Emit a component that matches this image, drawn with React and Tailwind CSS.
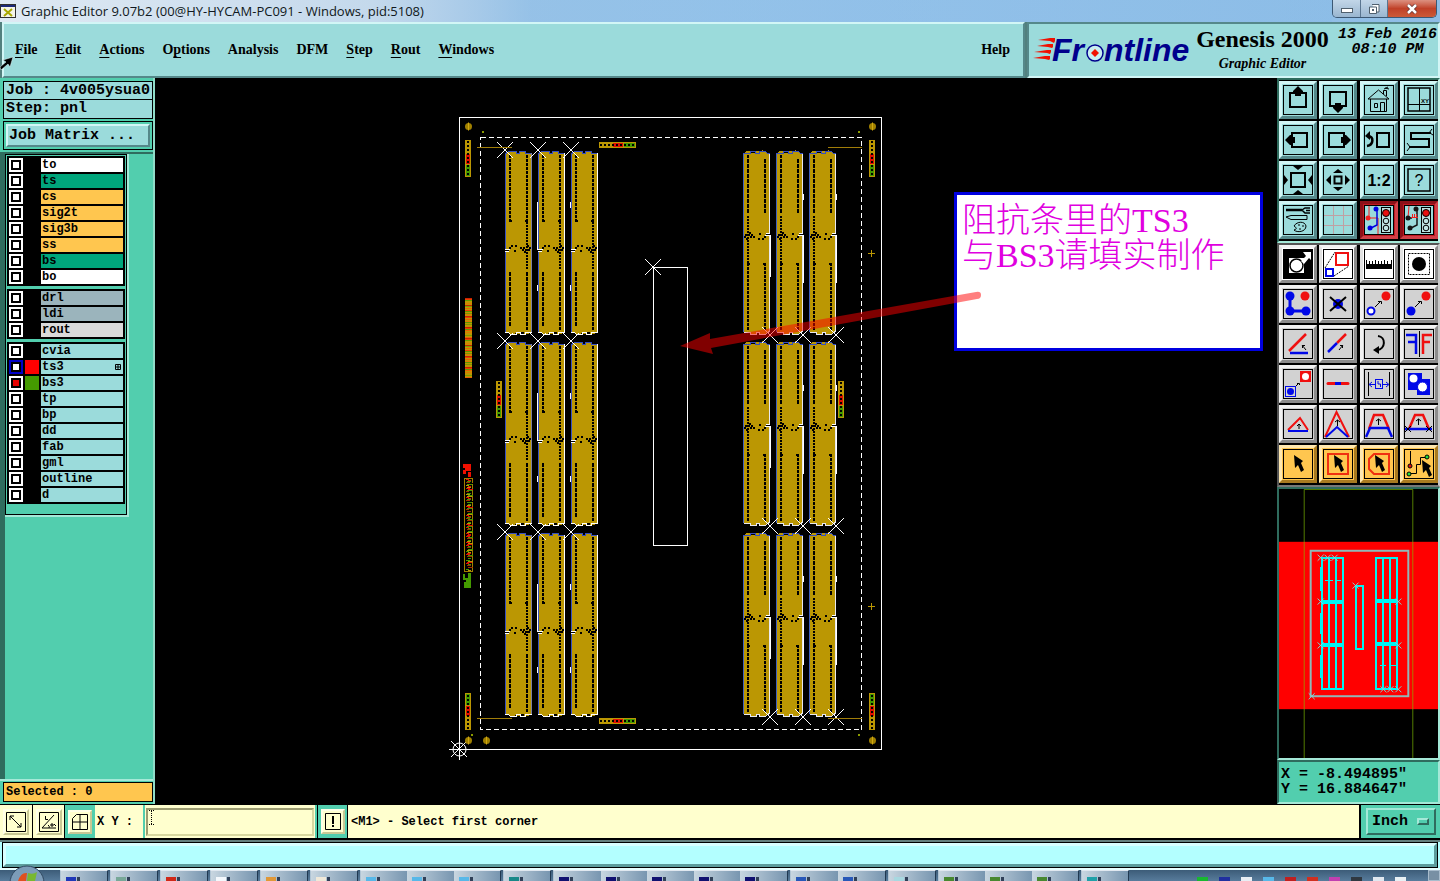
import React, { useState } from "react";

const MENUS = [
  { label: "File", key: 0 },
  { label: "Edit", key: 0 },
  { label: "Actions", key: 0 },
  { label: "Options", key: 1 },
  { label: "Analysis", key: -1 },
  { label: "DFM", key: -1 },
  { label: "Step", key: 0 },
  { label: "Rout", key: 0 },
  { label: "Windows", key: 0 },
];

const LAYER_GROUPS = [
  [
    { name: "to", color: "bg-white" },
    { name: "ts", color: "bg-[#00a67c]" },
    { name: "cs", color: "bg-[#ffc64f]" },
    { name: "sig2t", color: "bg-[#ffc64f]" },
    { name: "sig3b", color: "bg-[#ffc64f]" },
    { name: "ss", color: "bg-[#ffc64f]" },
    { name: "bs", color: "bg-[#00a67c]" },
    { name: "bo", color: "bg-white" },
  ],
  [
    { name: "drl", color: "bg-[#9bb4bc]" },
    { name: "ldi", color: "bg-[#9bb4bc]" },
    { name: "rout", color: "bg-[#dadada]" },
  ],
  [
    { name: "cvia", color: "bg-[#9bdbdb]" },
    { name: "ts3", color: "bg-[#9bdbdb]", swatch: "bg-[#ff0000]", box: "bg-[#0000c8]", affected: true },
    { name: "bs3", color: "bg-[#9bdbdb]", swatch: "bg-[#449a00]", work: true },
    { name: "tp", color: "bg-[#9bdbdb]" },
    { name: "bp", color: "bg-[#9bdbdb]" },
    { name: "dd", color: "bg-[#9bdbdb]" },
    { name: "fab", color: "bg-[#9bdbdb]" },
    { name: "gml", color: "bg-[#9bdbdb]" },
    { name: "outline", color: "bg-[#9bdbdb]" },
    { name: "d", color: "bg-[#9bdbdb]" },
  ],
];

const RED = "#f01010";
const BLUE = "#0008e8";

/* ---------------- TOOL ICONS (30 x 30) ---------------- */
const Pointer = ({ x = 0, y = 0 }) => (
  <path
    transform={`translate(${x} ${y})`}
    d="M0 0L9 6L7 8L10 15L7 17L4 10L1 13Z"
    fill="#000"
  />
);

const TrafficLight = ({ a, b }) => (
  <>
    <path d="M5 1V13H14V29" fill="none" stroke={a} />
    <path d="M13 4V20L7 23" fill="none" stroke={b} strokeWidth="1.5" />
    <circle cx="4" cy="13" r="2.5" fill={a} />
    <circle cx="12" cy="4" r="2.5" fill={b} />
    <circle cx="6" cy="23" r="2.5" fill={b} />
    <rect x="17.5" y="2.5" width="9" height="25" fill="#bfe3e3" stroke="#000" />
    <circle cx="22" cy="8" r="3.5" fill="#e81010" stroke="#000" />
    <circle cx="22" cy="16" r="2.8" fill="#bfe3e3" stroke="#000" />
    <circle cx="22" cy="23" r="2.8" fill="#bfe3e3" stroke="#000" />
  </>
);

const VIEW_TOOLS = [
  {
    name: "Pan up",
    icon: (
      <>
        <rect x="7" y="8" width="16" height="14" fill="none" stroke="#000" strokeWidth="2" />
        <path d="M15 1L20 6V8H18V11H12V8H10V6Z" />
      </>
    ),
  },
  {
    name: "Pan down",
    icon: (
      <>
        <rect x="7" y="7" width="16" height="14" fill="none" stroke="#000" strokeWidth="2" />
        <path d="M15 28L20 23V21H18V18H12V21H10V23Z" />
      </>
    ),
  },
  {
    name: "Home",
    icon: (
      <g fill="none" stroke="#000">
        <path d="M4 14L14.500 5L25 14Z" />
        <path d="M6.500 14V26.500H22.500V14M10.500 18.500H13.500V22.500H10.500ZM16.500 26V17.500H20.500V26M19.500 9V5.500H22.500V11" />
        <path d="M20 4L24 2M21 3L25 4" />
      </g>
    ),
  },
  {
    name: "Zoom coordinates",
    icon: (
      <>
        <rect x="4" y="3" width="22" height="23" fill="none" stroke="#000" strokeWidth="1.500" />
        <path d="M15.500 3V26M4 19.500H26" stroke="#000" fill="none" />
        <text x="17" y="18" fontSize="6" fontWeight="bold" fontFamily="Liberation Sans, sans-serif">XY</text>
      </>
    ),
  },
  {
    name: "Pan left",
    icon: (
      <>
        <rect x="9" y="8" width="15" height="14" fill="none" stroke="#000" strokeWidth="2" />
        <path d="M2 15L7 10H8V12H12V18H8V20H7Z" />
      </>
    ),
  },
  {
    name: "Pan right",
    icon: (
      <>
        <rect x="6" y="8" width="15" height="14" fill="none" stroke="#000" strokeWidth="2" />
        <path d="M28 15L23 10H22V12H18V18H22V20H23Z" />
      </>
    ),
  },
  {
    name: "Previous view",
    icon: (
      <>
        <rect x="13" y="8" width="12" height="14" fill="none" stroke="#000" strokeWidth="2" />
        <path d="M4 11C10 11 10 20 3 21" fill="none" stroke="#000" strokeWidth="2.500" />
        <path d="M1 11L6 6V15Z" />
      </>
    ),
  },
  {
    name: "Serpentine pan",
    icon: (
      <>
        <path d="M27 8H7V14H25V22H5" fill="none" stroke="#000" strokeWidth="2" />
        <path d="M25 8L28 4M26 8L29 10M6 22L3 18M6 22L3 26" fill="none" stroke="#000" />
      </>
    ),
  },
  {
    name: "Zoom in",
    icon: (
      <>
        <rect x="8" y="8" width="14" height="14" fill="none" stroke="#000" strokeWidth="2" />
        <path d="M10 1H20L15 5ZM10 29H20L15 25ZM1 10V20L5 15ZM29 10V20L25 15Z" />
      </>
    ),
  },
  {
    name: "Zoom out",
    icon: (
      <>
        <rect x="11.500" y="11.500" width="7" height="7" fill="none" stroke="#000" strokeWidth="2" />
        <path d="M10 8H20L15 4ZM10 22H20L15 26ZM8 10V20L3 15ZM22 10V20L27 15Z" />
      </>
    ),
  },
  {
    name: "Zoom 1:2",
    icon: (
      <text x="15" y="21" textAnchor="middle" fontSize="16" fontWeight="bold" fontFamily="Liberation Sans, sans-serif">
        1:2
      </text>
    ),
  },
  {
    name: "Query",
    icon: (
      <>
        <rect x="4" y="4" width="22" height="22" fill="none" stroke="#000" strokeWidth="1.500" />
        <text x="15" y="21" textAnchor="middle" fontSize="16" fontFamily="Liberation Sans, sans-serif">
          ?
        </text>
      </>
    ),
  },
  {
    name: "Options",
    icon: (
      <>
        <path d="M3 5H19" stroke="#000" strokeWidth="2.500" />
        <path d="M27 3H22L19 5L22 8H27M23 5.500H27" fill="none" stroke="#000" strokeWidth="1.500" />
        <path d="M3 12L8 10.500H24V14.500H8Z" fill="none" stroke="#000" />
        <path d="M11 21C14 16 22 16 23 21C23 27 14 28 11 25C14 24 14 23 11 21Z" fill="none" stroke="#000" />
        <path d="M15 20H17M19 21H21M16 24H18" stroke="#000" />
      </>
    ),
  },
  {
    name: "Grid",
    icon: <path d="M10.500 0V30M20.500 0V30M0 10.500H30M0 20.500H30" stroke="#c0a0a4" fill="none" />,
  },
  { name: "Net check", tone: "alert", icon: <TrafficLight a="#f02020" b="#0000e0" /> },
  {
    name: "Short check",
    tone: "alert",
    icon: (
      <>
        <path d="M13 4V20L7 23M4 13H8" fill="none" stroke="#151515" strokeWidth="1.500" />
        <path d="M5 1L4 13" stroke="#f02020" />
        <circle cx="4" cy="13" r="2.5" fill="#151515" />
        <circle cx="12" cy="4" r="2.5" fill="#151515" />
        <circle cx="6" cy="23" r="2.5" fill="#151515" />
        <rect x="17.5" y="2.5" width="9" height="25" fill="#bfe3e3" stroke="#000" />
        <circle cx="22" cy="8" r="3.5" fill="#e81010" stroke="#000" />
        <circle cx="22" cy="16" r="2.8" fill="#bfe3e3" stroke="#000" />
        <circle cx="22" cy="23" r="2.8" fill="#bfe3e3" stroke="#000" />
        <path d="M7 12.500H14M8.500 9V12M10.500 9V12M12.500 9V12" stroke="#f02020" />
      </>
    ),
  },
];

const EDIT_TOOLS = [
  {
    name: "Feature select",
    tone: "white",
    frame: "bg-black",
    icon: (
      <>
        <rect x="6" y="9" width="15" height="15" fill="#fff" />
        <circle cx="13.500" cy="16.500" r="6.500" fill="#fff" stroke="#000" strokeWidth="1.500" />
        <path d="M18 12L23 7L20 3H28V11L26 9L21 15Z" fill="#fff" />
      </>
    ),
  },
  {
    name: "Scale",
    tone: "white",
    icon: (
      <>
        <rect x="13" y="4" width="12" height="12" fill="none" stroke={RED} strokeWidth="2" />
        <rect x="3" y="20" width="7" height="7" fill="none" stroke={BLUE} strokeWidth="2" />
        <path d="M2 19L12 3M11 27L26 17" stroke="#000" strokeDasharray="2 1" />
      </>
    ),
  },
  {
    name: "Measure",
    tone: "white",
    icon: (
      <>
        <rect x="2" y="15" width="26" height="5" />
        <path
          d="M2.500 15V11M5.500 15V12M8.500 15V12M11.500 15V11M14.500 15V12M17.500 15V12M20.500 15V11M23.500 15V12M27.500 15V11"
          stroke="#000"
        />
      </>
    ),
  },
  {
    name: "Pad",
    tone: "white",
    icon: (
      <>
        <rect x="4.500" y="4.500" width="21" height="21" fill="none" stroke="#000" strokeDasharray="2 1" />
        <circle cx="15" cy="15" r="7" />
      </>
    ),
  },
  {
    name: "Add",
    icon: (
      <>
        <path d="M7 7V22H23" fill="none" stroke={BLUE} strokeWidth="3" />
        <circle cx="7" cy="7" r="4.500" fill={BLUE} />
        <circle cx="7" cy="22" r="4.500" fill={BLUE} />
        <circle cx="23" cy="22" r="4.500" fill={BLUE} />
        <circle cx="22" cy="7" r="4.500" fill={RED} />
      </>
    ),
  },
  {
    name: "Delete",
    icon: (
      <>
        <circle cx="15" cy="15" r="5" fill={BLUE} />
        <path d="M7 8L23 22M23 8L7 22" stroke="#000" strokeWidth="2" />
      </>
    ),
  },
  {
    name: "Move",
    icon: (
      <>
        <circle cx="22" cy="7" r="4.500" fill={RED} />
        <circle cx="7" cy="22" r="3.500" fill="#fff" stroke={BLUE} strokeWidth="2" />
        <path d="M11 18L17 12M14 12.500H17.500V15" fill="none" stroke="#000" />
      </>
    ),
  },
  {
    name: "Copy",
    icon: (
      <>
        <circle cx="22" cy="7" r="4.500" fill={RED} />
        <circle cx="7" cy="22" r="4.500" fill={BLUE} />
        <path d="M11 18L17 12M14 12.500H17.500V15" fill="none" stroke="#000" />
      </>
    ),
  },
  {
    name: "Rotate",
    icon: (
      <>
        <path d="M6 22L23 5" stroke={RED} strokeWidth="2.500" />
        <path d="M7 24H25" stroke={BLUE} strokeWidth="2.500" />
        <path d="M23 21L19 16M19.500 19V16.500H22" fill="none" stroke="#000" />
      </>
    ),
  },
  {
    name: "Stretch",
    icon: (
      <>
        <path d="M14 14L23 5" stroke={RED} strokeWidth="2.500" />
        <path d="M5 23L14 14" stroke={BLUE} strokeWidth="2.500" />
        <path d="M16 21L20 16M17 16.500H19.500V19" fill="none" stroke="#000" />
      </>
    ),
  },
  {
    name: "Turn",
    icon: (
      <>
        <path d="M14 7C22 8 22 20 13 21" fill="none" stroke="#000" strokeWidth="2" />
        <path d="M9 21L15 17V25Z" />
      </>
    ),
  },
  {
    name: "Mirror",
    icon: (
      <>
        <path d="M2 6H12V25M4 13H12" fill="none" stroke={BLUE} strokeWidth="2.500" />
        <path d="M15.500 2V28" stroke="#000" />
        <path d="M28 6H19V25M26 13H19" fill="none" stroke={RED} strokeWidth="2.500" />
      </>
    ),
  },
  {
    name: "Replace",
    icon: (
      <>
        <rect x="17" y="2" width="11" height="11" fill={RED} />
        <circle cx="22.500" cy="7.500" r="3.500" fill="#fff" />
        <rect x="2.500" y="17.500" width="10" height="10" fill="none" stroke={BLUE} />
        <circle cx="7.500" cy="22.500" r="3.500" fill={BLUE} />
        <path d="M13 17L16 14M14 14.500H16.500V16" fill="none" stroke="#000" />
      </>
    ),
  },
  {
    name: "Merge lines",
    icon: (
      <>
        <path d="M5 14.500H25" stroke={RED} strokeWidth="3" strokeLinecap="round" />
        <path d="M12 14.500H18" stroke={BLUE} strokeWidth="3" />
      </>
    ),
  },
  {
    name: "Spacing",
    icon: (
      <>
        <path d="M4.500 3V27M25.500 3V27" stroke="#000" />
        <path d="M6 15.500H12M18 15.500H24M8 13L5 15.500L8 18M22 13L25 15.500L22 18" fill="none" stroke={BLUE} />
        <rect x="11.500" y="10.500" width="7" height="9" fill="none" stroke={BLUE} />
        <path d="M14 12V15H16.500V18" fill="none" stroke={BLUE} />
      </>
    ),
  },
  {
    name: "Substitute",
    icon: (
      <>
        <path d="M4 4H18V10H26V26H13V21H4Z" fill={BLUE} />
        <circle cx="9.500" cy="9.500" r="4" fill="#fff" />
        <circle cx="18.500" cy="18" r="5" fill="#fff" stroke={BLUE} />
      </>
    ),
  },
  {
    name: "Slide corner",
    icon: (
      <>
        <path d="M5 21L17 9L25 21" fill="none" stroke={RED} strokeWidth="2" />
        <path d="M5 22H25" stroke={BLUE} strokeWidth="2" />
        <path d="M16 20V15M14 17L16 15L18 17" fill="none" stroke="#000" />
      </>
    ),
  },
  {
    name: "Move vertex",
    icon: (
      <>
        <path d="M2 28L13.500 3L26 28" fill="none" stroke={RED} strokeWidth="2" />
        <path d="M3 28L14 18L25 28" fill="none" stroke={BLUE} strokeWidth="2" />
        <path d="M14.500 17V11M12 13L14.500 11L17 13" fill="none" stroke="#000" />
      </>
    ),
  },
  {
    name: "Move segment",
    icon: (
      <>
        <path d="M5 20L10 6H19L25 20" fill="none" stroke={RED} strokeWidth="2.500" />
        <path d="M2 28L6 19H24L28 28" fill="none" stroke={BLUE} strokeWidth="2.500" />
        <path d="M14.500 16V10M12 12L14.500 10L17 12" fill="none" stroke="#000" />
      </>
    ),
  },
  {
    name: "Lift segment",
    icon: (
      <>
        <path d="M5 20L11 6H19L25 20" fill="none" stroke={RED} strokeWidth="2.500" />
        <path d="M1 20H28" stroke={BLUE} strokeWidth="2.500" />
        <path d="M1 17L7 23M7 17L1 23M22 17L28 23M28 17L22 23" stroke="#000" />
        <path d="M14.500 16V10M12 12L14.500 10L17 12" fill="none" stroke="#000" />
      </>
    ),
  },
  { name: "Select single", tone: "amber", icon: <Pointer x={11} y={6} /> },
  {
    name: "Select frame",
    tone: "amber",
    icon: (
      <>
        <rect x="5" y="5" width="20" height="20" fill="none" stroke="#f03010" strokeWidth="2" />
        <Pointer x={11} y={6} />
      </>
    ),
  },
  {
    name: "Select polygon",
    tone: "amber",
    icon: (
      <>
        <path d="M10 5H25V25H10L5 20V10Z" fill="none" stroke="#f03010" strokeWidth="2" />
        <Pointer x={11} y={6} />
      </>
    ),
  },
  {
    name: "Select net",
    tone: "amber",
    icon: (
      <>
        <path d="M6.500 2V15M5 24.500H12.500V15.500H16.500V8.500H23" fill="none" stroke="#000" />
        <circle cx="6" cy="17" r="2" fill="#e01010" stroke="#000" />
        <circle cx="5" cy="25" r="2" fill="#20e040" stroke="#000" />
        <circle cx="23" cy="8" r="2" fill="#20e040" stroke="#000" />
        <Pointer x={18} y={11} />
      </>
    ),
  },
];

const TONES = {
  teal: "bg-[#9bdbdb] border-t-[#d2f6f6] border-l-[#d2f6f6] border-r-[#55888a] border-b-[#55888a]",
  gray: "bg-[#d2d2d2] border-t-[#f2f2f2] border-l-[#f2f2f2] border-r-[#8c8c8c] border-b-[#8c8c8c]",
  white: "bg-white border-t-[#f2f2f2] border-l-[#e2e2e2] border-r-[#8c8c8c] border-b-[#8c8c8c]",
  amber: "bg-[#ffc64f] border-t-[#ffe8b0] border-l-[#ffe8b0] border-r-[#a87a20] border-b-[#a87a20]",
  alert: "bg-[#c01820] border-t-[#8c1018] border-l-[#8c1018] border-r-[#d04048] border-b-[#d04048]",
};

function ToolButton({ tool, tone }) {
  const t = tool.tone || tone;
  return (
    <button
      aria-label={tool.name}
      className={`flex size-[38px] items-center justify-center border-3 ${TONES[t]}`}
    >
      <span className={`block size-[30px] border border-black ${tool.frame || (t === "alert" ? "bg-[#9bdbdb]" : "")}`}>
        <svg viewBox="1 1 28 28" className="block size-full">
          {tool.icon}
        </svg>
      </span>
    </button>
  );
}

/* ---------------- BOARD DRAWING ---------------- */
const SCATTER = [
  [4, 97], [6, 95], [10, 95], [9, 100], [15, 97], [17, 99], [18, 97], [19, 101], [22, 95], [23, 99], [24, 97], [20, 99],
];

const STRIP_BODY =
  "M0 4L2 3L4 1H11V3H14V1H20V3H26V181L24 184H19V182H15V184H11V182L8 185L4 183V182H0Z";

function Strip({ x, y, variant, flip }) {
  const edge = variant === 0 ? "#8080a0" : "#ffffff";
  return (
    <g transform={flip ? `translate(${x + 27} ${y + 185}) rotate(180)` : `translate(${x} ${y})`}>
      <path d={STRIP_BODY} fill="#bb9703" />
      <path d="M0.500 182V4L4 1H11V3H14V1H20V3H26" fill="none" stroke={flip ? "#e8e8f0" : "#3850c0"} />
      <path d="M26.500 3V182" fill="none" stroke={flip ? "#4060c0" : edge} />
      <path d="M0 182H3L5 184H11V182H15V184H20V182H27" fill="none" stroke={flip ? "#3850c0" : "#fff"} />
      {variant > 0 && <path d="M-0.500 52V58M-0.500 135V141" stroke="#fff" />}
      {(variant === 1 || flip) && <path d="M-0.500 58V100" stroke="#fff" />}
      <path d="M0 99.500H5M0 101.500H4" stroke="#fff" />
      <path d="M0 100.500H4" stroke="#000" />
      <path d="M5 5V72" stroke="#000" strokeWidth="2" strokeDasharray="3 1" />
      <path d="M5 122V177" stroke="#000" strokeWidth="2" strokeDasharray="4 1" />
      <path d="M22 5V72" stroke="#000" strokeWidth="2" strokeDasharray="3 1" />
      <path d="M22 72V120" stroke="#000" strokeWidth="2" strokeDasharray="2 1" />
      <path d="M22 122V180" stroke="#000" strokeWidth="2" strokeDasharray="4 1" />
      <path d="M4 71H7M20 71H23" stroke="#000" strokeWidth="2" />
      {SCATTER.map(([sx, sy]) => (
        <rect key={`${sx}-${sy}`} x={sx} y={sy} width="2" height="2" />
      ))}
    </g>
  );
}

const Cross = ({ x, y, r = 8 }) => (
  <path
    d={`M${x - r} ${y - r}L${x + r} ${y + r}M${x + r} ${y - r}L${x - r} ${y + r}`}
    stroke="#fff"
    fill="none"
    shapeRendering="crispEdges"
  />
);

function Coupon({ x, y, rotate = 0 }) {
  return (
    <g transform={`translate(${x} ${y}) rotate(${rotate})`}>
      <rect width="6" height="37" fill="#bb9703" />
      <rect x="1" y="14" width="4" height="10" fill="#e01000" />
      <rect x="1" y="25" width="4" height="11" fill="#449a00" />
      <path d="M3 1V36" stroke="#000" strokeWidth="2" strokeDasharray="2 2" />
    </g>
  );
}

const LEFT_COLS = [505, 538, 571];
const RIGHT_COLS = [743, 776, 809];
const ROWS = [150, 341, 532];
const FIDUCIALS = [[468.5, 126.5], [872.5, 126.5], [468.5, 740.5], [486.5, 740.5], [872.5, 740.5]];
const STRIPE_COLORS = ["#c82000", "#bb9703", "#e86000", "#bb9703", "#5a9a00", "#bb9703", "#e07800", "#e84000", "#7a9a00", "#bb9703"];
const LABEL_COLORS = ["#e01000", "#449a00", "#a03000", "#e01000", "#bb9703", "#000", "#449a00"];

function Board() {
  return (
    <svg viewBox="155 78 1121 726" preserveAspectRatio="xMaxYMin meet" className="block size-full">
      <g fill="none" stroke="#fff" shapeRendering="crispEdges">
        <rect x="459.500" y="117.500" width="422" height="632" />
        <rect x="480.500" y="137.500" width="381" height="592" strokeDasharray="5 3" />
        <rect x="653.500" y="267.500" width="34" height="278" />
      </g>

      <g shapeRendering="crispEdges">
        {ROWS.map((y) => (
          <React.Fragment key={y}>
            {LEFT_COLS.map((x, i) => (
              <Strip key={x} x={x} y={y} variant={i} />
            ))}
            {RIGHT_COLS.map((x, i) => (
              <Strip key={x} x={x} y={y} variant={i} flip />
            ))}
          </React.Fragment>
        ))}
      </g>
      {ROWS.map((y) => (
        <React.Fragment key={y}>
          {LEFT_COLS.map((x) => (
            <Cross key={x} x={x} y={y} />
          ))}
          {RIGHT_COLS.map((x) => (
            <Cross key={x} x={x + 27} y={y + 185} />
          ))}
        </React.Fragment>
      ))}
      <Cross x={653} y={267} />

      {/* origin */}
      <Cross x={459} y={749} />
      <circle cx="459.500" cy="749.500" r="6.500" fill="none" stroke="#fff" />
      <path d="M449 749.500H470M459.500 739V760" stroke="#fff" />

      {/* tooling marks */}
      {FIDUCIALS.map(([x, y]) => (
        <g key={`${x}-${y}`}>
          <circle cx={x} cy={y} r="3.500" fill="#a08000" />
          <path d={`M${x} ${y - 4}V${y + 4}`} stroke="#d0a810" />
        </g>
      ))}
      <path d="M482 132H484M858 132H860M471 735H473M858 735H860" stroke="#8a9a00" strokeWidth="2" />
      <path d="M477 147.500H512M828 147.500H862M477 718.500H512M828 718.500H862" stroke="#a07d08" />
      <path d="M868 253.500H875M871.500 250V257M868 606.500H875M871.500 603V610" stroke="#bb9703" />

      <g shapeRendering="crispEdges">
        <Coupon x={465} y={140} />
        <Coupon x={869} y={140} />
        <Coupon x={471} y={730} rotate={180} />
        <Coupon x={875} y={730} rotate={180} />
        <Coupon x={496} y={381} />
        <Coupon x={838} y={381} />
        <Coupon x={599} y={148} rotate={-90} />
        <Coupon x={599} y={724} rotate={-90} />

        {Array.from({ length: 80 }, (_, i) => (
          <rect key={i} x="465" y={298 + i} width="7" height="1" fill={STRIPE_COLORS[(i * 7 + (i >> 2)) % 10]} />
        ))}

        <path d="M463 464H471V471H466V474H463V470H465V468H463ZM468 472H471V477H468Z" fill="#f01000" />
        <rect x="464.500" y="478.500" width="8" height="93" fill="none" stroke="#a08000" />
        {Array.from({ length: 92 }, (_, i) => (
          <rect
            key={i}
            x={466 + ((i * 5) % 3)}
            y={479 + i}
            width={3 + ((i * 3 + (i >> 1)) % 3)}
            height="1"
            fill={LABEL_COLORS[(i * 3 + (i >> 3)) % 7]}
          />
        ))}
        <path d="M463 574H465V578H468V573H471V588H464V582H466V580H463Z" fill="#449a00" />
      </g>
    </svg>
  );
}

function Canvas() {
  return (
    <main className="relative min-w-0 flex-1 bg-black">
      <div className="absolute inset-0">
        <Board />
      </div>
      <div className="absolute top-[114px] right-[13px] h-[159px] w-[309px] border-3 border-[#0000e0] bg-white pt-2 pl-[5px] font-['Liberation_Serif','Noto_Sans_CJK_SC',serif] text-[34px] leading-[35px] font-light whitespace-nowrap text-[#e000e0]">
        阻抗条里的TS3
        <br />
        与BS3请填实制作
      </div>
      <svg
        viewBox="155 78 1121 726"
        preserveAspectRatio="xMaxYMin meet"
        className="pointer-events-none absolute inset-0 size-full"
      >
        <path
          d="M680 346L710 333L710 339L976 292Q981 291 981 295Q981 299 977 299L711 348L713 354Z"
          fill="#ff0000"
          fillOpacity="0.5"
        />
      </svg>
    </main>
  );
}

/* ---------------- LEFT PANEL ---------------- */
function LayerRow({ layer }) {
  return (
    <label className="flex h-[14px] items-center bg-black text-[12px] leading-[14px]">
      <span className={`flex size-[14px] items-center justify-center ${layer.box || "bg-white"}`}>
        <input
          type="checkbox"
          defaultChecked={!!layer.work}
          className="m-0 size-[10px] appearance-none border-2 border-black bg-white checked:bg-[#e80000]"
        />
      </span>
      <span className={`mx-[2px] size-[14px] ${layer.swatch || "bg-black"}`} />
      <span className={`flex h-[14px] flex-1 items-center justify-between pl-px ${layer.color}`}>
        {layer.name}
        {layer.affected && (
          <svg viewBox="0 0 6 6" className="mr-[2px] size-[6px]">
            <path d="M0.500 0.500H5.500V5.500H0.500ZM3 0V6M0 3H6" fill="none" stroke="#000" />
          </svg>
        )}
      </span>
    </label>
  );
}

function LeftPanel() {
  return (
    <aside className="flex w-[155px] shrink-0 flex-col border-r-2 border-[#8fdcc8] bg-[#52ceae] font-['Liberation_Mono',monospace] font-bold text-black">
      <div className="pt-[3px] pl-[3px] text-[15px] leading-[17px] whitespace-nowrap">
        <div className="h-[19px] overflow-hidden border border-black bg-[#9bdbdb] pl-[2px]">Job : 4v005ysua0</div>
        <div className="h-[19px] border border-t-0 border-black bg-[#9bdbdb] pl-[2px]">Step: pnl</div>
        <div className="mt-[2px] border border-black p-[2px]">
          <button className="block h-[23px] w-full border-2 border-t-[#d2f6f6] border-r-[#55888a] border-b-[#55888a] border-l-[#d2f6f6] bg-[#9bdbdb] pl-px text-left">
            Job Matrix ...
          </button>
        </div>
      </div>

      <div className="mt-[2px] flex-1 border-t-2 border-l-5 border-[#2f6c5e]">
        <div className="w-[124px] border-r-2 border-b-2 border-[#a5e9d8]">
          <div className="flex flex-col gap-[3px] border border-black px-px pt-px pb-[10px]">
            {LAYER_GROUPS.map((group, i) => (
              <div key={i} className="flex flex-col gap-[2px] bg-black p-[2px]">
                {group.map((layer) => (
                  <LayerRow key={layer.name} layer={layer} />
                ))}
              </div>
            ))}
          </div>
        </div>
      </div>

      <div className="border-t-2 border-[#a5e9d8] pt-px pb-[2px] pl-[3px]">
        <div className="h-5 border border-black bg-[#ffc64f] pl-[2px] text-[12px] leading-[18px]">Selected : 0</div>
      </div>
    </aside>
  );
}

/* ---------------- RIGHT PANEL ---------------- */
const PREVIEW_MARKS = [
  [1320, 557], [1327, 557], [1334, 557], [1320, 601], [1320, 645],
  [1398, 601], [1398, 645], [1398, 689], [1390, 689], [1383, 689], [1355, 585], [1311, 696],
];

function Preview() {
  return (
    <svg viewBox="1278 488 160 270" preserveAspectRatio="xMidYMid slice" className="block size-full bg-black">
      <rect x="1278" y="541" width="160" height="168" fill="#ff0000" />
      <path d="M1303.500 758V488.500H1412.500V758" fill="none" stroke="#80c000" strokeOpacity="0.650" />
      <rect x="1310" y="550" width="98" height="146" fill="none" stroke="#90b8b8" strokeWidth="2" />
      <g fill="none" stroke="#00f4f4" strokeWidth="2" shapeRendering="crispEdges">
        <path d="M1321 557H1342V689H1321ZM1328 557V689M1335 557V689" />
        <path d="M1376 557H1397V689H1376ZM1383 557V689M1390 557V689" />
        <rect x="1355" y="585" width="8" height="64" />
        <path d="M1319.500 566V590M1319.500 612V634M1319.500 655V678" strokeWidth="1" />
        <path d="M1320 601H1342M1320 645H1342M1376 600H1397M1376 644H1397" strokeWidth="4" />
        <path d="M1324 580H1332M1336 580H1340M1380 665H1386M1391 665H1396" strokeWidth="1" />
      </g>
      {PREVIEW_MARKS.map(([x, y]) => (
        <path
          key={`${x}-${y}`}
          d={`M${x - 3} ${y - 3}L${x + 3} ${y + 3}M${x + 3} ${y - 3}L${x - 3} ${y + 3}`}
          stroke="#80d8d8"
        />
      ))}
    </svg>
  );
}

function RightPanel() {
  return (
    <aside className="flex w-[164px] shrink-0 flex-col border-l border-black bg-[#2f6c5e]">
      <div className="grid grid-cols-4 gap-[2px] border-2 border-t-[#2f6c5e] border-r-[#c8f2e8] border-b-[#a5e9d8] border-l-[#2f6c5e] bg-black pt-px pb-[2px]">
        {VIEW_TOOLS.map((tool) => (
          <ToolButton key={tool.name} tool={tool} tone="teal" />
        ))}
      </div>
      <div className="grid grid-cols-4 gap-[2px] border-2 border-t-[#555] border-r-[#c8c8c8] border-b-[#777] border-l-[#555] bg-black pb-[2px]">
        {EDIT_TOOLS.map((tool) => (
          <ToolButton key={tool.name} tool={tool} tone="gray" />
        ))}
      </div>
      <div className="min-h-0 flex-1 border-2 border-t-[#2f6c5e] border-r-[#a5e9d8] border-b-[#a5e9d8] border-l-[#2f6c5e]">
        <Preview />
      </div>
      <div className="h-11 border-2 border-t-[#2f6c5e] border-r-[#a5e9d8] border-b-[#a5e9d8] border-l-[#2f6c5e] bg-[#52ceae] pt-[5px] pl-[2px] font-['Liberation_Mono',monospace] text-[15px] leading-[15px] font-bold whitespace-pre">
        <div>X = -8.494895"</div>
        <div>Y = 16.884647"</div>
      </div>
    </aside>
  );
}

/* ---------------- HEADER ---------------- */
function TitleBar() {
  return (
    <div className="flex h-[22px] shrink-0 items-start bg-linear-to-r from-[#a9c3dc] via-[#9cc6ea] to-[#8fbde6]">
      <div className="flex h-full min-w-0 flex-1 items-center bg-linear-to-r from-[#dfe9f3] from-0% via-[#c4d9ec] via-28% to-[#86bbe8]/40 to-40%">
        <svg viewBox="0 0 16 14" className="h-[14px] w-4 shrink-0">
          <rect x="0.500" y="0.500" width="15" height="13" fill="#f4f4e8" stroke="#303030" />
          <rect x="1" y="1" width="14" height="2" fill="#1c2878" />
          <path d="M4 5L12 12M12 5L4 12" stroke="#a8a800" strokeWidth="2" />
        </svg>
        <h1 className="ml-[5px] truncate font-['Open_Sans','Noto_Sans',sans-serif] text-[13px] leading-5 text-[#101820]">
          Graphic Editor 9.07b2 (00@HY-HYCAM-PC091 - Windows, pid:5108)
        </h1>
      </div>
      <div className="mr-[3px] flex h-[18px] overflow-hidden rounded-b-[5px] border border-t-0 border-[#3c5874]">
        <button aria-label="Minimize" className="flex w-7 items-center justify-center border-r border-[#5a7590] bg-linear-to-b from-[#c2d6e8] to-[#9ab6d0]">
          <span className="mt-1 h-[5px] w-3 border border-[#50606e] bg-white" />
        </button>
        <button aria-label="Restore" className="flex w-[27px] items-center justify-center border-r border-[#5a7590] bg-linear-to-b from-[#c2d6e8] to-[#9ab6d0]">
          <svg viewBox="0 0 12 12" className="size-3">
            <path d="M4 1.500H11V9H9M1.500 4H8.500V10.500H1.500Z" fill="#fff" stroke="#50606e" />
            <rect x="4" y="6" width="2" height="2" fill="#50606e" />
          </svg>
        </button>
        <button aria-label="Close" className="flex w-12 items-center justify-center bg-linear-to-b from-[#dc9080] via-[#c04028] to-[#cc5a38]">
          <svg viewBox="0 0 12 10" className="h-[10px] w-3">
            <path d="M2 1L10 9M10 1L2 9" stroke="#603030" strokeWidth="4" />
            <path d="M2 1L10 9M10 1L2 9" stroke="#fff" strokeWidth="2.500" />
          </svg>
        </button>
      </div>
    </div>
  );
}

function FrontlineLogo() {
  return (
    <svg viewBox="0 0 162 42" className="h-[42px] w-[162px] shrink-0" aria-label="Frontline">
      <path
        d="M5 11L17 9H22V12L21 14L17 12ZM4 17L15 15H20V18L19 19L15 18ZM1 23L14 21H18V23L17 25L14 24ZM0 29L12 27H17V30L16 31L12 30Z"
        fill="#f01000"
      />
      <g fill="#00008c" fontFamily="Liberation Sans, sans-serif" fontSize="32" fontWeight="bold" fontStyle="italic">
        <text x="19" y="32">Fr</text>
        <text x="71" y="32">ntline</text>
      </g>
      <circle cx="62" cy="24" r="8" fill="#c8eef0" stroke="#00008c" strokeWidth="1.500" />
      <path d="M62 20L66 24L62 28L58 24Z" fill="#f01000" />
    </svg>
  );
}

function Header() {
  return (
    <header className="flex h-14 shrink-0 gap-[2px] bg-[#52807e] font-['Liberation_Serif',serif] font-bold text-black">
      <nav className="relative ml-[2px] flex min-w-0 flex-1 items-center border-2 border-t-[#d2f6f6] border-r-[#55888a] border-b-[#55888a] border-l-[#d2f6f6] bg-[#9bdbdb] pr-[13px] pl-[11px] text-[14px] leading-5">
        <div className="flex flex-1 gap-[18px]">
          {MENUS.map(({ label, key }) => (
            <button key={label} className="whitespace-nowrap">
              {key < 0 ? (
                label
              ) : (
                <>
                  {label.slice(0, key)}
                  <span className="underline underline-offset-[3px]">{label[key]}</span>
                  {label.slice(key + 1)}
                </>
              )}
            </button>
          ))}
        </div>
        <button>Help</button>
        <svg viewBox="0 0 14 14" className="absolute bottom-[6px] left-[-4px] size-[14px]">
          <path d="M13 1L10 11L8 8L1 14L0 11L6 6L3 4Z" fill="#000" stroke="#e8ffff" strokeWidth="0.500" />
        </svg>
      </nav>
      <div className="flex w-[413px] shrink-0 items-start border-2 border-t-[#55888a] border-r-[#d2f6f6] border-b-[#d2f6f6] border-l-[#55888a] bg-[#9bdbdb]">
        <div className="self-center pl-1">
          <FrontlineLogo />
        </div>
        <div className="w-[135px] shrink-0 text-center whitespace-nowrap">
          <div className="text-[24px] leading-[30px]">Genesis 2000</div>
          <div className="text-[14px] leading-5 italic">Graphic Editor</div>
        </div>
        <div className="ml-auto pt-[3px] pr-px text-center font-['Liberation_Mono',monospace] text-[15px] leading-[15px] whitespace-nowrap italic">
          <div>13 Feb 2016</div>
          <div>08:10 PM</div>
        </div>
      </div>
    </header>
  );
}

/* ---------------- BOTTOM ---------------- */
const CREAM_BEVEL = "border-2 border-t-[#ffffe8] border-l-[#ffffe8] border-r-[#c8c894] border-b-[#c8c894] bg-[#ffffce]";

function CommandBar() {
  const [coords, setCoords] = useState("");
  const [unit, setUnit] = useState("Inch");
  return (
    <div className="flex h-9 shrink-0 border-t border-b-2 border-black bg-[#ffffce] font-['Liberation_Mono',monospace] text-[12px] font-bold">
      <button aria-label="Snap" className="flex w-[33px] items-center justify-center border-r border-black">
        <span className={`p-px ${CREAM_BEVEL}`}>
          <svg viewBox="0 0 20 20" className="block size-5">
            <path d="M0.500 0.500H19.500V19.500H0.500Z M4 4L15 15M4 8V4H8M15 11V15H11" fill="none" stroke="#000" />
          </svg>
        </span>
      </button>
      <button aria-label="Angle" className="flex w-8 items-center justify-center border-r border-black">
        <span className={`p-px ${CREAM_BEVEL}`}>
          <svg viewBox="0 0 20 20" className="block size-5">
            <path d="M0.500 0.500H19.500V19.500H0.500Z M3 16L15 3M3 16H17M6.500 4V7.500H9M9 13Q11 14 10 16" fill="none" stroke="#000" />
            <path d="M12 12H14V14H12ZM15 12L17 14" fill="none" stroke="#000" />
          </svg>
        </span>
      </button>
      <button aria-label="Grid snap" className="flex w-[30px] items-center justify-center bg-[#52ceae]">
        <span className={`p-[2px] ${CREAM_BEVEL}`}>
          <svg viewBox="0 0 16 16" className="block size-4">
            <path d="M4.500 0.500H15.500V15.500H0.500V4.500ZM8 0V16M0 8H16" fill="none" stroke="#000" />
          </svg>
        </span>
      </button>
      <label htmlFor="xy" className="flex w-12 items-center pl-[2px] whitespace-nowrap">
        X Y :
      </label>
      <div className="relative flex w-[174px] items-center border-x-2 border-[#52ceae] px-px">
        <input
          id="xy"
          value={coords}
          onChange={(e) => setCoords(e.target.value)}
          className="h-[28px] w-full border-2 border-t-[#9c9c70] border-r-[#d8d8a0] border-b-[#d8d8a0] border-l-[#9c9c70] bg-[#ffffce] px-1 outline-none"
        />
        <svg viewBox="0 0 5 15" className="pointer-events-none absolute top-[5px] left-1 h-[15px] w-[5px]">
          <path d="M0 0.500H5M0 14.500H5M2.500 1V14" stroke="#000" strokeDasharray="1 1" />
        </svg>
      </div>
      <button aria-label="Alert" className="flex w-[31px] items-center justify-center border-x border-black bg-[#52ceae]">
        <span className={`p-[2px] ${CREAM_BEVEL}`}>
          <svg viewBox="0 0 16 17" className="block h-[17px] w-4">
            <path d="M0.500 0.500H15.500V16.500H0.500Z" fill="none" stroke="#000" />
            <path d="M8 3V11M8 12V14" stroke="#000" strokeWidth="2" />
          </svg>
        </span>
      </button>
      <div className="flex min-w-0 flex-1 items-center pl-[3px] whitespace-nowrap">&lt;M1&gt; - Select first corner</div>
      <div className="flex w-[81px] items-center border-l-2 border-black bg-[#52ceae] pr-1 pl-[5px]">
        <div className="relative flex h-[27px] w-full items-center border-2 border-t-[#a5e9d8] border-r-[#2f6c5e] border-b-[#2f6c5e] border-l-[#a5e9d8]">
          <select
            aria-label="Units"
            value={unit}
            onChange={(e) => setUnit(e.target.value)}
            className="w-full appearance-none bg-transparent pl-1 text-[15px] leading-5 outline-none"
          >
            <option>Inch</option>
            <option>MM</option>
          </select>
          <span className="pointer-events-none absolute right-[5px] h-[7px] w-3 border-2 border-t-[#a5e9d8] border-r-[#2f6c5e] border-b-[#2f6c5e] border-l-[#a5e9d8]" />
        </div>
      </div>
    </div>
  );
}

const TASKS = [
  { w: "w-12", icons: ["#2038b8"] },
  { w: "w-12", icons: ["#78a898"] },
  { w: "w-12", icons: ["#d02818"] },
  { w: "w-12", icons: ["#f4f8fc"] },
  { w: "w-12", icons: ["#e09838"] },
  { w: "w-12", icons: ["#f0e8d8"] },
  { w: "w-[141px]", icons: ["#58b8e8", "#58b8e8", "#58b8e8"] },
  { w: "w-12", icons: ["#188888"] },
  { w: "w-[235px]", icons: ["#101070", "#101070", "#101070", "#101070", "#101070"] },
  { w: "w-24", icons: ["#2858b8", "#2858b8"] },
  { w: "w-12", icons: ["#a8d8e0"] },
  { w: "w-[141px]", icons: ["#488830", "#488830", "#488830"] },
  { w: "w-12", icons: ["#20a0a8"] },
];

const TRAY = ["bg-[#18b830]", "bg-[#2030a0]", "bg-[#e8eef4]", "bg-[#58b8e8]", "bg-[#c02020]", "bg-[#d03020]", "bg-[#c040b0]", "bg-[#303840]", "bg-[#e0e8f0]", "bg-[#e8f0f4]"];

function Taskbar() {
  return (
    <div className="relative flex h-[11px] shrink-0 gap-[2px] bg-linear-to-b from-[#3c5c78] to-[#587c9c] pl-[60px]">
      <button aria-label="Start" className="absolute top-[-5px] left-[9px] h-4 w-9 overflow-hidden">
        <svg viewBox="0 0 36 16" className="block h-4 w-9">
          <circle cx="18" cy="18" r="17" fill="#7c9cb8" stroke="#304860" />
          <path d="M9 16Q12 7 18 8L17 16Z" fill="#e05020" />
          <path d="M19 8Q24 10 28 7L26 16H18Z" fill="#78b830" />
        </svg>
      </button>
      {TASKS.map((task, i) => (
        <button
          key={i}
          aria-label={`Task ${i + 1}`}
          className={`flex items-end border-t border-r border-l border-t-[#e0e8f0] border-r-[#203850] border-l-[#b0c4d4] ${task.w}`}
        >
          {task.icons.map((c, n) => (
            <span key={n} className="flex h-full flex-1 items-end justify-start bg-linear-to-r from-[#c8d6e0] to-[#7896b0] pl-[5px]">
              <svg viewBox="0 0 14 4" className="h-1 w-[14px]">
                <rect width="10" height="4" fill={c} />
                <path d="M11 0H14V4H11Z" fill="#304058" />
              </svg>
            </span>
          ))}
        </button>
      ))}
      <div className="ml-auto flex items-end gap-[11px] pr-5">
        {TRAY.map((c, i) => (
          <span key={i} className={`h-1 w-[11px] ${c}`} />
        ))}
      </div>
      <span className="w-3 border border-[#a8bccc] bg-[#7890a4]" />
    </div>
  );
}

export default function App() {
  return (
    <div className="flex h-screen flex-col overflow-hidden bg-black">
      <TitleBar />
      <Header />
      <div className="flex min-h-0 flex-1">
        <LeftPanel />
        <Canvas />
        <RightPanel />
      </div>
      <CommandBar />
      <div className="h-[30px] shrink-0 border-t-2 border-b-2 border-t-[#64807e] border-b-[#e8ffff] bg-[#b3ffff] px-[2px]">
        <div className="h-full border border-black">
          <div className="h-full border-[3px] border-t-[#d8ffff] border-r-[#5c9c9c] border-b-[#5c9c9c] border-l-[#d8ffff]" />
        </div>
      </div>
      <Taskbar />
    </div>
  );
}
